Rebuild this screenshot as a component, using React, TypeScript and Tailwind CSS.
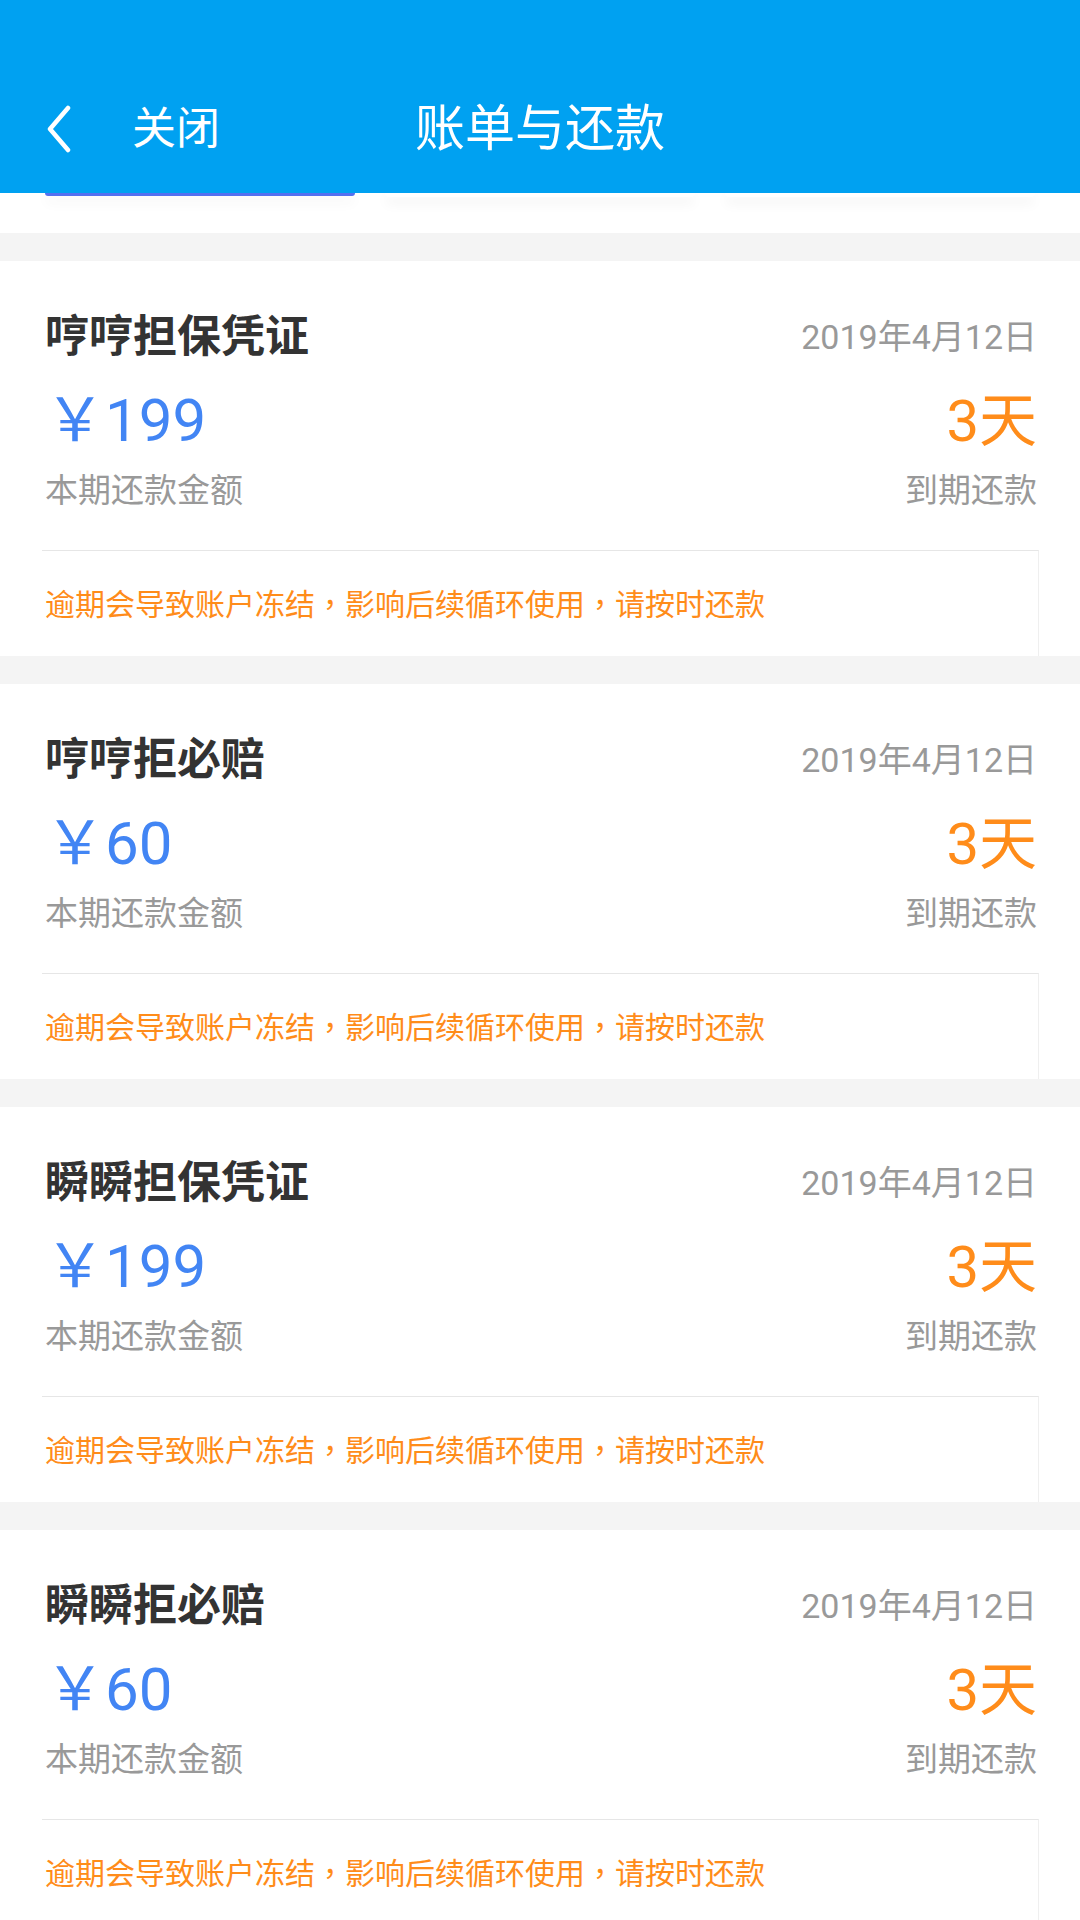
import React from 'react'

const bills = [
  { name: '哼哼担保凭证', amount: '199' },
  { name: '哼哼拒必赔', amount: '60' },
  { name: '瞬瞬担保凭证', amount: '199' },
  { name: '瞬瞬拒必赔', amount: '60' },
]

// the full-width comma sits centred in the reference, as in the TC cut
const Comma = () => <span className="font-['Noto_Sans_CJK_TC']">，</span>

const BillCard = ({ name, amount }: { name: string; amount: string }) => {
  return (
    <div className="bg-white h-[395px] flex flex-col">
      <div className="pl-[45px] pr-[43px] pt-[52px]">
        <div className="h-[48px] flex items-center justify-between">
          <span className="text-[44px] leading-[48px] font-bold text-[#333333]">{name}</span>
          <span className="text-[34px] leading-[48px] text-[#999999]">2019年4月12日</span>
        </div>
        <div className="mt-[28px] h-[64px] flex items-center justify-between">
          <span className="text-[60px] leading-[64px] text-[#4285f4]">￥{amount}</span>
          <span className="text-[58px] leading-[64px] text-[#ff8c1a]">3天</span>
        </div>
        <div className="mt-[20px] h-[36px] flex items-center justify-between text-[33px] leading-[36px] text-[#999999]">
          <span>本期还款金额</span>
          <span>到期还款</span>
        </div>
      </div>
      <div className="mt-auto ml-[42px] mr-[41px] h-[106px] border-t border-t-[#e6e6e6] border-r border-r-[#efefef] flex items-center pl-[3px] text-[30px] leading-[36px] text-[#ff8c1a]">
        <span>
          逾期会导致账户冻结<Comma />影响后续循环使用<Comma />请按时还款
        </span>
      </div>
    </div>
  )
}

export default function App() {
  return (
    <div className="min-h-screen bg-[#f4f4f4] font-[Roboto,'Noto_Sans_CJK_SC',sans-serif]">
      <header className="h-[193px] bg-[#00a1f1] pt-[85px] relative z-10">
        <div className="h-[88px] grid grid-cols-[1fr_auto_1fr] items-center text-white">
          <div className="flex items-center pl-[46px]">
            <svg width="26" height="48" viewBox="0 0 26 48" fill="none">
              <polyline
                points="22,3 4,24 22,45"
                stroke="white"
                strokeWidth="4.5"
                strokeLinecap="round"
                strokeLinejoin="round"
              />
            </svg>
            <span className="ml-[60px] text-[44px] leading-[48px]">关闭</span>
          </div>
          <h1 className="text-[50px] leading-[56px]">账单与还款</h1>
          <div />
        </div>
      </header>

      <div className="h-[40px] bg-white flex gap-[30px] px-[45px]">
        <div className="flex-1 h-[3px] rounded-b-[4px] bg-[#5470f0] shadow-[0_6px_12px_rgba(0,0,0,0.08)]" />
        <div className="flex-1 h-[4px] rounded-b-[6px] bg-white shadow-[0_6px_12px_rgba(0,0,0,0.08)]" />
        <div className="flex-1 h-[4px] rounded-b-[6px] bg-white shadow-[0_6px_12px_rgba(0,0,0,0.08)]" />
      </div>

      <div className="pt-[28px] flex flex-col gap-[28px]">
        {bills.map((b, i) => (
          <BillCard key={i} name={b.name} amount={b.amount} />
        ))}
      </div>
    </div>
  )
}
